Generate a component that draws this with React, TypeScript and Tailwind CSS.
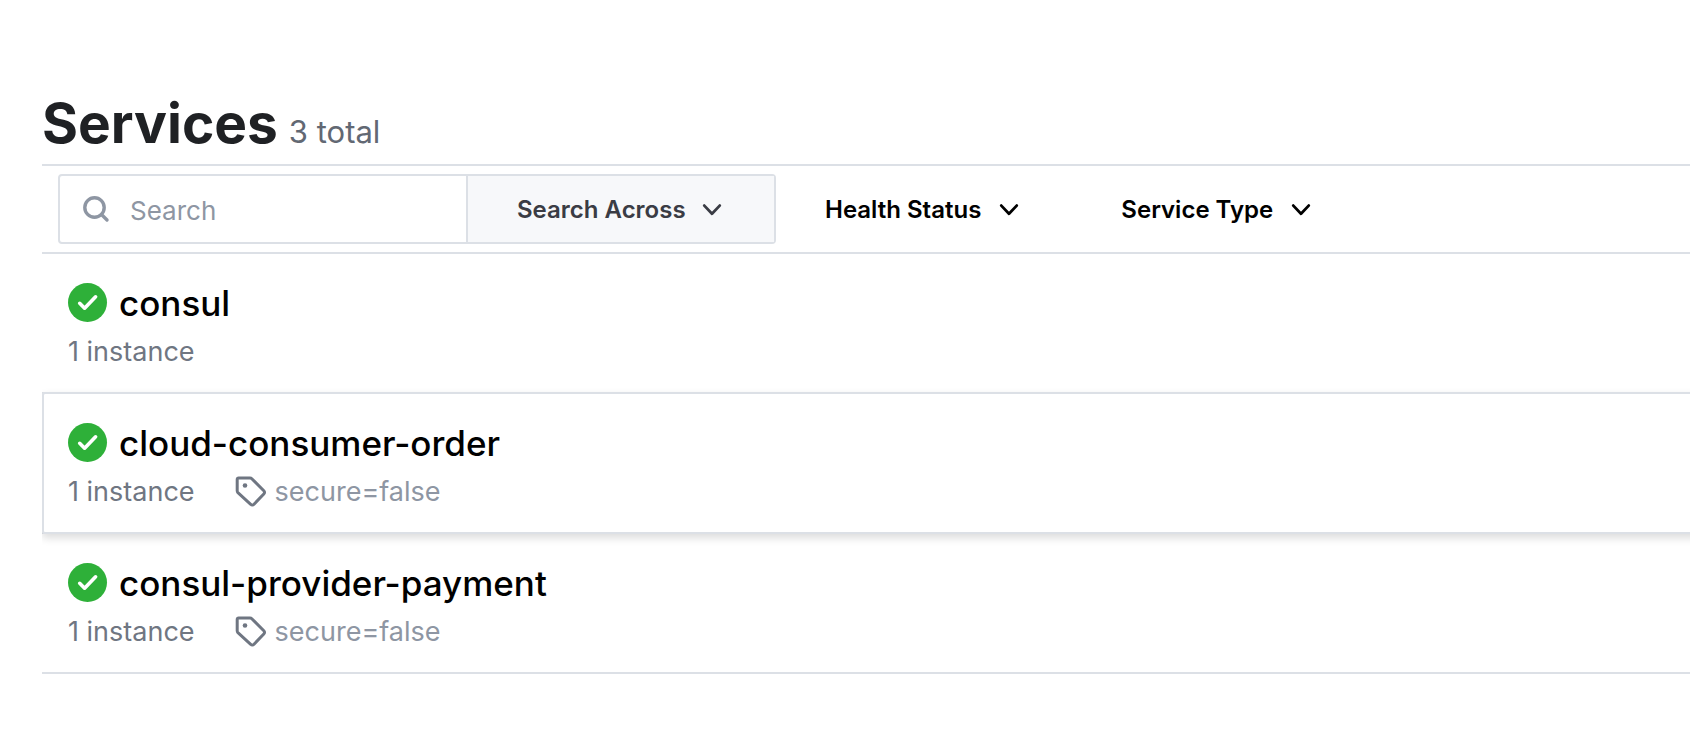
import React from "react";

type Service = { name: string; instances: string; tag?: string; raised?: boolean };

const services: Service[] = [
  { name: "consul", instances: "1 instance" },
  { name: "cloud-consumer-order", instances: "1 instance", tag: "secure=false", raised: true },
  { name: "consul-provider-payment", instances: "1 instance", tag: "secure=false" },
];

function Chevron() {
  return (
    <svg className="h-3 w-5 shrink-0" viewBox="0 0 20 12" fill="none" aria-hidden="true">
      <path d="M2.3 1.6 10 9.8 17.7 1.6" stroke="currentColor" strokeWidth="2.8" strokeLinecap="round" strokeLinejoin="round" />
    </svg>
  );
}

function SearchIcon() {
  return (
    <svg className="h-7 w-7 shrink-0 text-[#8e96a3]" viewBox="0 0 28 28" fill="none" aria-hidden="true">
      <circle cx="12.5" cy="12.5" r="9.7" stroke="currentColor" strokeWidth="3.4" />
      <path d="M19.5 19.5 25 25" stroke="currentColor" strokeWidth="3.4" strokeLinecap="round" />
    </svg>
  );
}

function PassingIcon() {
  return (
    <svg className="h-10 w-10 shrink-0" viewBox="0 0 40 40" fill="none" role="img" aria-label="Passing">
      <circle cx="19.5" cy="19.5" r="19.5" fill="#2eb039" />
      <path d="M11.7 20.3 16.6 25.2 27.6 13.8" stroke="#fff" strokeWidth="3.6" strokeLinecap="round" strokeLinejoin="round" />
    </svg>
  );
}

function TagIcon() {
  return (
    <svg className="h-8 w-8 shrink-0 text-[#6f7682]" viewBox="0 0 32 32" fill="none" aria-hidden="true">
      <path
        d="M2.2 3.4c0-.9.5-1.4 1.4-1.4h11.4c.7 0 1.3.2 1.8.7l12 12c1 1 1 2.300 0 3.300L19 28.300c-1 1-2.300 1-3.300 0L2.900 16.600c-.5-.5-.7-1.100-.7-1.800z"
        stroke="currentColor"
        strokeWidth="3"
        strokeLinejoin="round"
      />
      <circle cx="10" cy="9.5" r="2.3" fill="currentColor" />
    </svg>
  );
}

function ServiceRow({ service }: { service: Service }) {
  const frame = service.raised
    ? "relative -mr-3 rounded-l-[3px] border-l-2 border-[#dce0e6] pl-6 shadow-[0_4px_8px_rgba(0,0,0,0.14)]"
    : "border-[#dce0e6] pl-[26px]";
  return (
    <li className={`-mt-0.5 border-y-2 pt-[27px] pb-5 ${frame}`}>
      <a href="#" className="flex items-center gap-[11px] text-[35px] leading-[44px] font-medium text-black">
        <PassingIcon />
        {service.name}
      </a>
      <div className="mt-[7px] flex items-center gap-10 text-[27px] leading-10 text-[#6f7682]">
        <span>{service.instances}</span>
        {service.tag && (
          <span className="flex items-center gap-2 text-[#8e96a3]">
            <TagIcon />
            {service.tag}
          </span>
        )}
      </div>
    </li>
  );
}

function FilterButton({ label }: { label: string }) {
  return (
    <button className="flex items-center gap-[18px] pt-0.5 pr-[53px] pl-[49px] text-2xl font-semibold text-black">
      {label}
      <Chevron />
    </button>
  );
}

export default function App() {
  return (
    <main className="min-h-screen bg-white pt-[88px] pl-[42px] font-['Inter','Liberation_Sans',sans-serif]">
      <header className="flex items-baseline gap-[11px] pb-1.5">
        <h1 className="text-[55px] leading-[70px] font-bold text-[#1f2124]">Services</h1>
        <span className="text-[31px] text-[#626873]">3 total</span>
      </header>
      <div className="flex items-center border-y-2 border-[#dce0e6] py-2 pl-4">
        <div className="flex h-[70px] rounded-[4px] border-2 border-[#dce0e6]">
          <label className="flex w-[406px] items-center gap-5 pl-[22px]">
            <SearchIcon />
            <input
              type="search"
              aria-label="Search"
              placeholder="Search"
              className="w-full min-w-0 bg-transparent pt-0.5 text-[26px] text-[#1f2124] outline-none placeholder:text-[#8e96a3]"
            />
          </label>
          <button className="flex w-[308px] items-center gap-4 border-l-2 border-[#dce0e6] bg-[#f7f8fa] pt-0.5 pl-[49px] text-2xl font-semibold text-[#3a3c44]">
            Search Across
            <Chevron />
          </button>
        </div>
        <FilterButton label="Health Status" />
        <FilterButton label="Service Type" />
      </div>
      <ul className="overflow-hidden pb-4">
        {services.map((service) => (
          <ServiceRow key={service.name} service={service} />
        ))}
      </ul>
    </main>
  );
}
